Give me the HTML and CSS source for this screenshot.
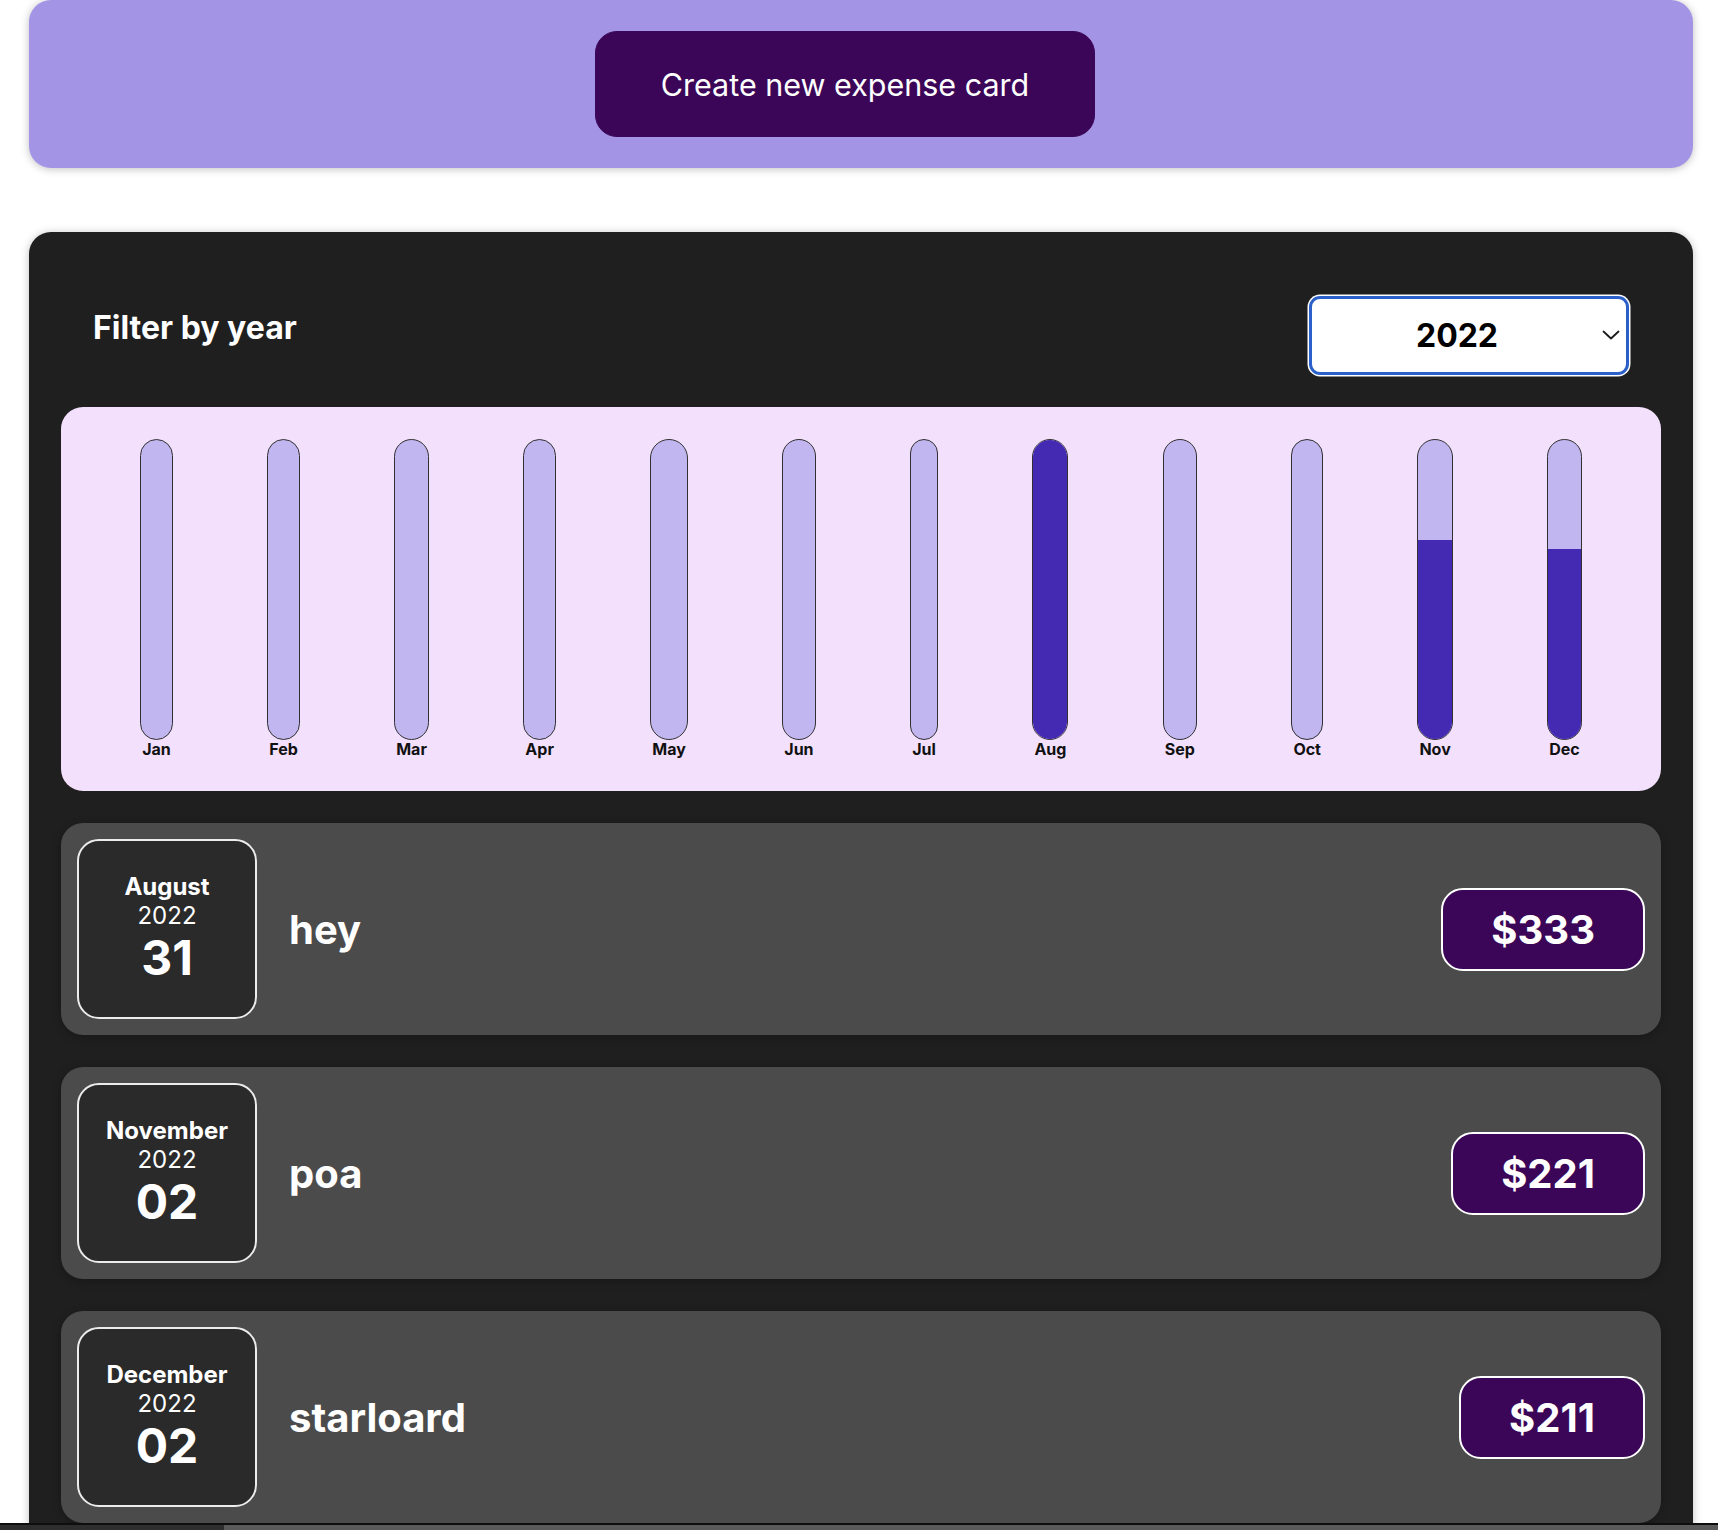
FILE: index.html
```html
<!DOCTYPE html>
<html lang="en">
<head>
<meta charset="utf-8">
<title>Expense Tracker</title>
<link rel="stylesheet" href="styles.css">
</head>
<body>
<div class="page">
  <div class="new-expense">
    <button class="new-expense__btn">Create new expense card</button>
  </div>

  <div class="expenses">
    <div class="expenses-filter">
      <div class="expenses-filter__control">
        <label class="expenses-filter__label">Filter by year</label>
        <div class="select">
          <span class="select__value">2022</span>
          <svg class="select__chevron" width="18" height="10" viewBox="0 0 18 10"><path d="M1.5 1.5 L9 8.5 L16.5 1.5" fill="none" stroke="#1a1a1a" stroke-width="1.8" stroke-linecap="round" stroke-linejoin="round"/></svg>
        </div>
      </div>
    </div>

    <div class="chart">
      <div class="chart-bar"><div class="chart-bar__inner"><div class="chart-bar__fill" style="height:0%"></div></div><div class="chart-bar__label">Jan</div></div>
      <div class="chart-bar"><div class="chart-bar__inner"><div class="chart-bar__fill" style="height:0%"></div></div><div class="chart-bar__label">Feb</div></div>
      <div class="chart-bar"><div class="chart-bar__inner"><div class="chart-bar__fill" style="height:0%"></div></div><div class="chart-bar__label">Mar</div></div>
      <div class="chart-bar"><div class="chart-bar__inner"><div class="chart-bar__fill" style="height:0%"></div></div><div class="chart-bar__label">Apr</div></div>
      <div class="chart-bar"><div class="chart-bar__inner"><div class="chart-bar__fill" style="height:0%"></div></div><div class="chart-bar__label">May</div></div>
      <div class="chart-bar"><div class="chart-bar__inner"><div class="chart-bar__fill" style="height:0%"></div></div><div class="chart-bar__label">Jun</div></div>
      <div class="chart-bar"><div class="chart-bar__inner"><div class="chart-bar__fill" style="height:0%"></div></div><div class="chart-bar__label">Jul</div></div>
      <div class="chart-bar"><div class="chart-bar__inner"><div class="chart-bar__fill" style="height:100%"></div></div><div class="chart-bar__label">Aug</div></div>
      <div class="chart-bar"><div class="chart-bar__inner"><div class="chart-bar__fill" style="height:0%"></div></div><div class="chart-bar__label">Sep</div></div>
      <div class="chart-bar"><div class="chart-bar__inner"><div class="chart-bar__fill" style="height:0%"></div></div><div class="chart-bar__label">Oct</div></div>
      <div class="chart-bar"><div class="chart-bar__inner"><div class="chart-bar__fill" style="height:66.4%"></div></div><div class="chart-bar__label">Nov</div></div>
      <div class="chart-bar"><div class="chart-bar__inner"><div class="chart-bar__fill" style="height:63.4%"></div></div><div class="chart-bar__label">Dec</div></div>
    </div>

    <ul class="expenses-list">
      <li class="expense-item">
        <div class="expense-item__description">
          <div class="expense-date">
            <div class="expense-date__month">August</div>
            <div class="expense-date__year">2022</div>
            <div class="expense-date__day">31</div>
          </div>
          <h2 class="expense-item__title">hey</h2>
        </div>
        <div class="expense-item__price">$333</div>
      </li>
      <li class="expense-item">
        <div class="expense-item__description">
          <div class="expense-date">
            <div class="expense-date__month">November</div>
            <div class="expense-date__year">2022</div>
            <div class="expense-date__day">02</div>
          </div>
          <h2 class="expense-item__title">poa</h2>
        </div>
        <div class="expense-item__price">$221</div>
      </li>
      <li class="expense-item">
        <div class="expense-item__description">
          <div class="expense-date">
            <div class="expense-date__month">December</div>
            <div class="expense-date__year">2022</div>
            <div class="expense-date__day">02</div>
          </div>
          <h2 class="expense-item__title">starloard</h2>
        </div>
        <div class="expense-item__price">$211</div>
      </li>
    </ul>
  </div>
  <div class="hscroll"><div class="hscroll__thumb"></div></div>
</div>
</body>
</html>
```

FILE: styles.css
```css
* {
  box-sizing: border-box;
}

html, body {
  margin: 0;
  padding: 0;
  background: #ffffff;
  font-family: Inter, "Noto Sans", "Liberation Sans", sans-serif;
}

.page {
  height: 1530px;
  overflow: hidden;
  padding-left: 4px;
}

.new-expense {
  width: 1664px;
  height: 168px;
  margin: 0 auto 64px;
  background-color: #a494e6;
  border-radius: 22px;
  box-shadow: 0 1px 8px rgba(0, 0, 0, 0.25);
  display: flex;
  justify-content: center;
  align-items: center;
}

.new-expense__btn {
  font: inherit;
  font-size: 30.5px;
  font-weight: 400;
  width: 500px;
  height: 106px;
  margin-right: 32px;
  color: #ffffff;
  background-color: #3b0657;
  border: 1px solid #3b0657;
  border-radius: 22px;
  cursor: pointer;
}

.expenses {
  width: 1664px;
  margin: 0 auto;
  padding: 32px;
  background-color: #1f1f1f;
  border-radius: 22px;
  box-shadow: 0 1px 8px rgba(0, 0, 0, 0.25);
}

.expenses-filter {
  color: #ffffff;
  padding: 0 32px;
}

.expenses-filter__control {
  display: flex;
  align-items: center;
  justify-content: space-between;
  margin: 32px 0;
}

.expenses-filter__label {
  font-size: 32px;
  font-weight: 700;
  margin-bottom: 16px;
}

.select {
  width: 320px;
  height: 79px;
  background: #ffffff;
  border: 3px solid #2b5fc9;
  border-radius: 11px;
  box-shadow: 0 0 0 1.5px #ffffff;
  display: flex;
  align-items: center;
  justify-content: center;
  padding-right: 24px;
  position: relative;
}

.select__value {
  color: #000000;
  font-size: 32px;
  font-weight: 700;
}

.select__chevron {
  position: absolute;
  right: 6px;
  top: 31px;
}

.chart {
  height: 384px;
  padding: 32px;
  border-radius: 22px;
  background-color: #f3e0fc;
  display: flex;
  justify-content: space-around;
  text-align: center;
}

.chart-bar {
  height: 100%;
  display: flex;
  flex-direction: column;
  align-items: center;
}

.chart-bar__inner {
  flex: 1;
  width: 100%;
  min-width: 28px;
  border: 1.5px solid #313131;
  border-radius: 24px;
  background-color: #c1b6ef;
  overflow: hidden;
  display: flex;
  flex-direction: column;
  justify-content: flex-end;
}

.chart-bar__fill {
  width: 100%;
  background-color: #4429b3;
}

.chart-bar__label {
  font-size: 16px;
  font-weight: 700;
  color: #111111;
  line-height: 19px;
  padding: 0 2px;
}

.expenses-list {
  list-style: none;
  margin: 0;
  padding: 0;
}

.expense-item {
  display: flex;
  justify-content: space-between;
  align-items: center;
  height: 212px;
  margin: 32px 0;
  padding: 16px;
  border-radius: 22px;
  background-color: #4b4b4b;
  box-shadow: 0 2px 8px rgba(0, 0, 0, 0.25);
}

.expense-item__description {
  display: flex;
  align-items: center;
  flex: 1;
}

.expense-date {
  width: 180px;
  height: 180px;
  flex: none;
  display: flex;
  flex-direction: column;
  align-items: center;
  justify-content: center;
  border: 2px solid #ececec;
  border-radius: 22px;
  background-color: #2a2a2a;
  color: #ffffff;
}

.expense-date__month {
  font-size: 24px;
  font-weight: 700;
}

.expense-date__year {
  font-size: 24px;
  font-weight: 400;
}

.expense-date__day {
  font-size: 48px;
  font-weight: 700;
  line-height: 56px;
}

.expense-item__title {
  flex: 1;
  margin: 0 32px;
  font-size: 40px;
  font-weight: 700;
  color: #ffffff;
}

.expense-item__price {
  font-size: 40px;
  font-weight: 700;
  color: #ffffff;
  background-color: #3b0657;
  border: 2px solid #ffffff;
  padding: 15px 48px;
  border-radius: 22px;
}

.hscroll {
  position: fixed;
  left: 0;
  right: 0;
  bottom: 0;
  height: 7px;
  background: #5a5a5a;
  border-top: 2px solid #0e0e0e;
}

.hscroll__thumb {
  width: 224px;
  height: 100%;
  background: #2e2e2e;
}
```
